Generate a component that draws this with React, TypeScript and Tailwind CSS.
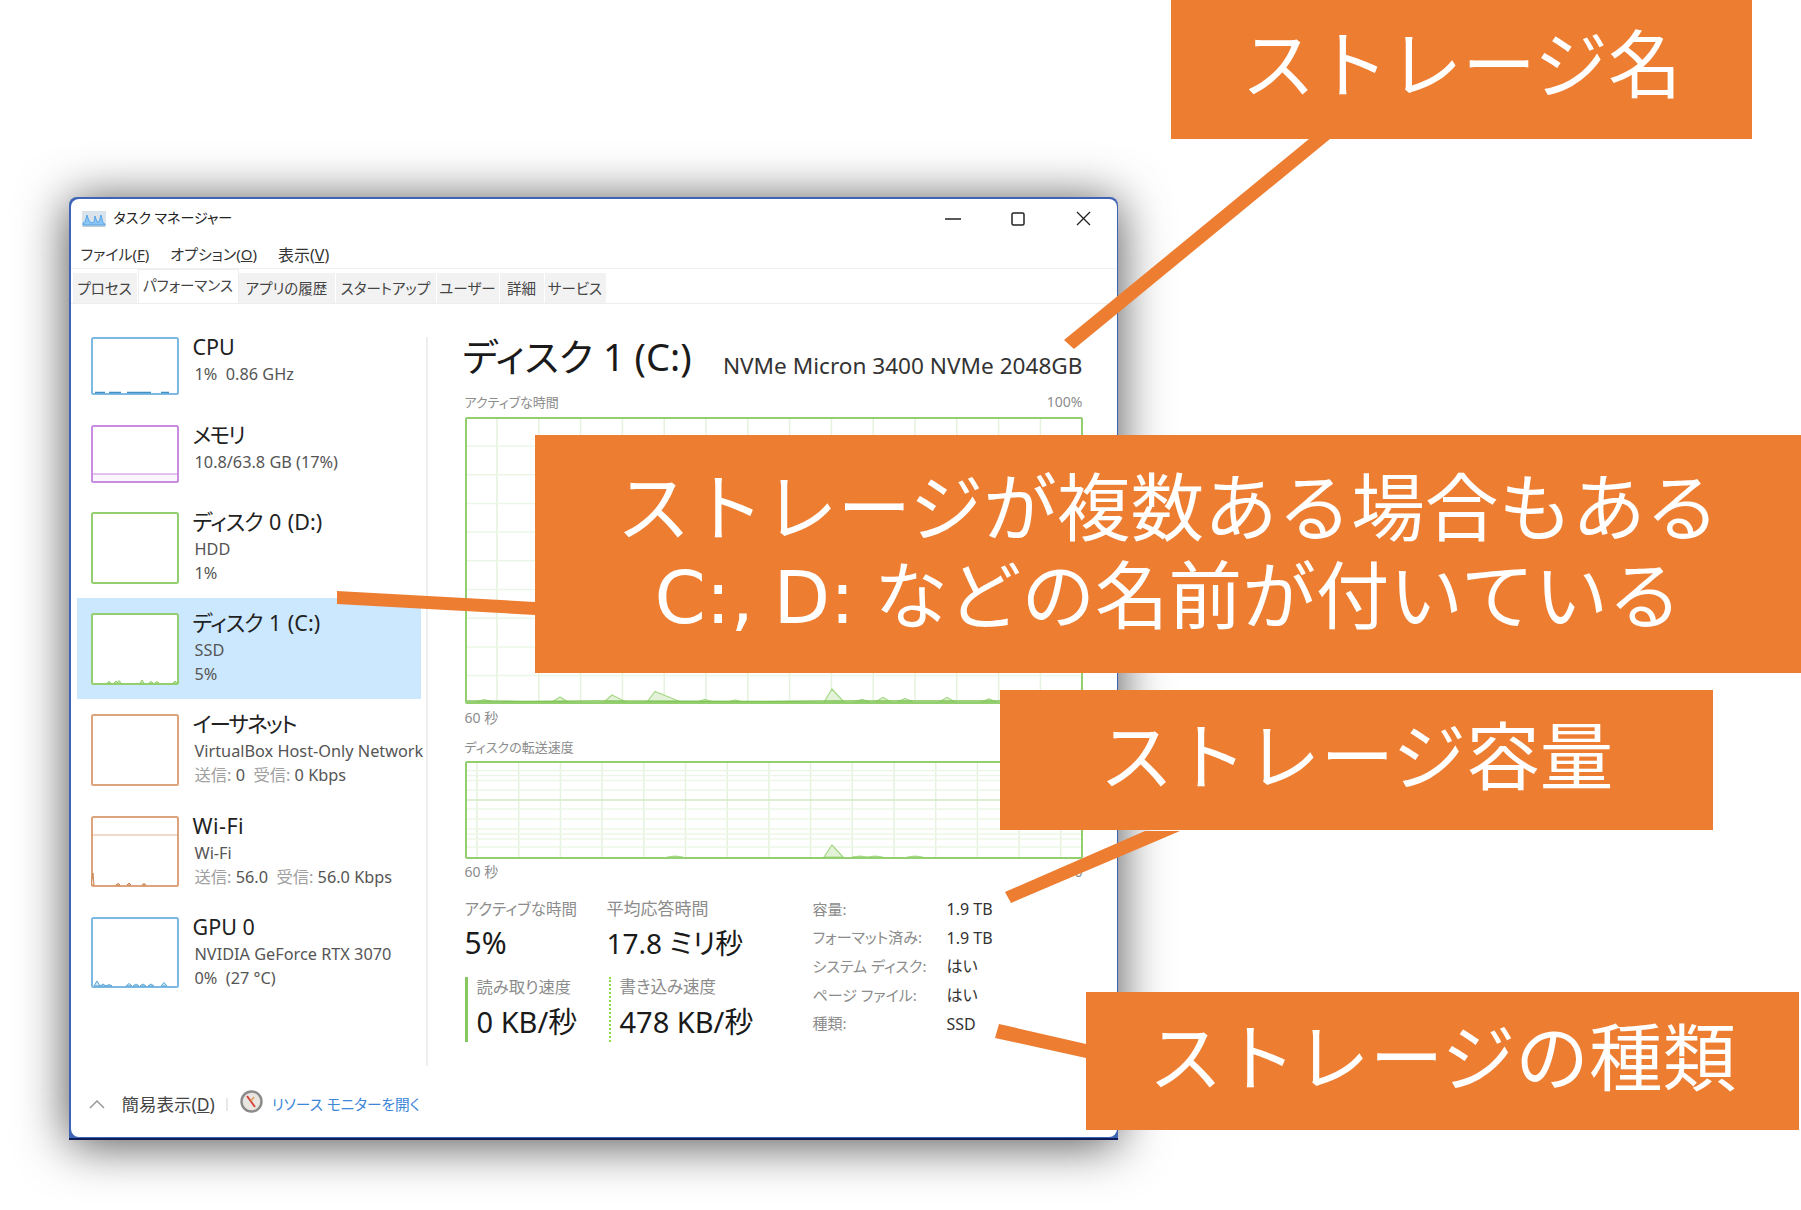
import type { ReactNode } from "react";

const ORANGE = "#ED7D31";

const peakPath = (peaks: number[][], base: number, w = 8) =>
  peaks
    .map(([x, h, r]) => `M${x - w} ${base} L${x} ${base - h} L${x + (r ?? w)} ${base} Z`)
    .join(" ");

const range = (n: number) => Array.from({ length: n }, (_, i) => i);

const Thumb = ({
  w = 88,
  h,
  color,
  children,
}: {
  w?: number;
  h: number;
  color: string;
  children?: ReactNode;
}) => (
  <svg width={w} height={h} className="shrink-0 block">
    <rect x="1" y="1" width={w - 2} height={h - 2} rx="1.5" fill="#fff" stroke={color} strokeWidth="2" />
    {children}
  </svg>
);

interface Row {
  name: ReactNode;
  lines: ReactNode[];
  rowClass: string;
  thumb: ReactNode;
}

const BLUE = "#7db9e2";
const PURPLE = "#c98ce0";
const GREEN = "#93cf6f";
const BROWN = "#dca37c";

const ROWS: Row[] = [
  {
    name: "CPU",
    lines: ["1%  0.86 GHz"],
    rowClass: "h-[88px]",
    thumb: (
      <Thumb h={58} color={BLUE}>
        <path d="M4 55.5H14M18 55.5H30M36 55.5H60M70 55.5H78" stroke="#3f8fc9" strokeWidth="1.5" />
      </Thumb>
    ),
  },
  {
    name: <span className="tracking-[-1.8px]">メモリ</span>,
    lines: ["10.8/63.8 GB (17%)"],
    rowClass: "h-[87px]",
    thumb: (
      <Thumb h={58} color={PURPLE}>
        <rect x="2" y="49" width="84" height="7" fill="#fbf5fd" />
        <path d="M2 49H86" stroke={PURPLE} strokeWidth="1" />
      </Thumb>
    ),
  },
  {
    name: (
      <span className="[word-spacing:1px]">
        <span className="tracking-[-1px]">ディスク</span> 0 (D:)
      </span>
    ),
    lines: ["HDD", "1%"],
    rowClass: "h-[101px]",
    thumb: <Thumb h={72} color={GREEN} />,
  },
  {
    name: (
      <span className="[word-spacing:1px]">
        <span className="tracking-[-1px]">ディスク</span> 1 (C:)
      </span>
    ),
    lines: ["SSD", "5%"],
    rowClass: "h-[101px] bg-[#cce8ff]",
    thumb: (
      <Thumb h={72} color={GREEN}>
        <path d={peakPath([[18, 1.5], [25, 2], [28, 2.5], [51, 3], [60, 1.5], [66, 1.5], [84, 2]], 70, 2)} fill="#dff0d2" stroke={GREEN} strokeWidth="1" />
      </Thumb>
    ),
  },
  {
    name: <span className="tracking-[-1.8px]">イーサネット</span>,
    lines: [
      "VirtualBox Host-Only Network",
      <>
        <span className="text-[#a0a0a0]">送信:</span> 0  <span className="text-[#a0a0a0]">受信:</span> 0 Kbps
      </>,
    ],
    rowClass: "h-[102px]",
    thumb: <Thumb h={72} color={BROWN} />,
  },
  {
    name: <span className="tracking-[0.5px]">Wi-Fi</span>,
    lines: [
      "Wi-Fi",
      <>
        <span className="text-[#a0a0a0]">送信:</span> 56.0  <span className="text-[#a0a0a0]">受信:</span> 56.0 Kbps
      </>,
    ],
    rowClass: "h-[101px]",
    thumb: (
      <Thumb h={71} color={BROWN}>
        <path d="M2 19H86" stroke="#eccdb7" strokeWidth="1.5" />
        <path d={peakPath([[2, 12, 1], [27, 1.5], [38, 2], [53, 1.5]], 69, 2)} fill="#f3dccb" stroke="#c98555" strokeWidth="1" />
      </Thumb>
    ),
  },
  {
    name: "GPU 0",
    lines: ["NVIDIA GeForce RTX 3070", "0%  (27 °C)"],
    rowClass: "h-[101px]",
    thumb: (
      <Thumb h={71} color={BLUE}>
        <path d={peakPath([[6, 5], [12, 2], [18, 1.5], [38, 2.5], [45, 2], [52, 2], [60, 2], [73, 3.5]], 69, 3)} fill="#cfe6f6" stroke="#5aa5d8" strokeWidth="1" />
      </Thumb>
    ),
  },
];

const TABS = [
  { label: "プロセス", cls: "w-[65px]" },
  { label: "パフォーマンス", cls: "w-[101px]", active: true },
  { label: "アプリの履歴", cls: "w-[97px]" },
  { label: "スタートアップ", cls: "w-[101px]" },
  { label: "ユーザー", cls: "w-[63px]" },
  { label: "詳細", cls: "w-[45px]" },
  { label: "サービス", cls: "w-[62px]" },
];

const SPECS = [
  ["容量:", "1.9 TB"],
  ["フォーマット済み:", "1.9 TB"],
  ["システム ディスク:", "はい"],
  ["ページ ファイル:", "はい"],
  ["種類:", "SSD"],
];

const Chart = ({
  height,
  vx,
  hy,
  strong,
  peaks,
  low,
}: {
  height: number;
  vx: number[];
  hy: number[];
  strong?: number;
  peaks: number[][];
  low?: string;
}) => (
  <svg width="618" height={height} className="block">
    {vx.map((x) => (
      <path key={x} d={`M${x} 1V${height - 1}`} stroke="#e5f2dd" strokeWidth="1.5" />
    ))}
    {hy.map((y) => (
      <path key={y} d={`M1 ${y}H617`} stroke={y === strong ? "#d3e9c4" : "#ecf6e6"} strokeWidth="1.5" />
    ))}
    <path d={peakPath(peaks, height - 2)} fill="#e4f2da" stroke="#a5d886" strokeWidth="1.2" />
    {low && <path d={low} stroke="#7fc455" strokeWidth="1.5" fill="none" />}
    <rect x="1" y="1" width="616" height={height - 2} rx="1" fill="none" stroke={GREEN} strokeWidth="2" />
  </svg>
);

const Label = ({ children, className = "" }: { children: ReactNode; className?: string }) => (
  <div className={`h-5 leading-5 text-[#8c8c8c] whitespace-nowrap ${className}`}>{children}</div>
);

const Value = ({ children, className = "" }: { children: ReactNode; className?: string }) => (
  <div className={`h-9 leading-9 text-[#1a1a1a] whitespace-nowrap ${className}`}>{children}</div>
);

const Callout = ({ className, children }: { className: string; children: ReactNode }) => (
  <div
    className={`absolute flex flex-col items-center justify-center bg-[#ED7D31] text-white text-[73.6px] leading-[88px] whitespace-nowrap font-['DejaVu_Sans','Noto_Sans_CJK_JP',sans-serif] ${className}`}
  >
    {children}
  </div>
);

export default function App() {
  return (
    <div className="relative w-[1801px] h-[1210px] overflow-hidden bg-white pt-[197px] pl-[69px]">
      {/* Task Manager window */}
      <div className="w-[1049px] h-[943px] p-[1.5px] bg-[#3f63b5] shadow-[0_4px_50px_rgba(0,0,0,0.7)] rounded-tl-[8px] rounded-tr-[8px] border-b-2 border-[#101d5c] [font-feature-settings:'palt'] font-['Noto_Sans','Noto_Sans_CJK_JP',sans-serif]">
        <div className="flex flex-col h-full bg-white rounded-[8px] overflow-hidden">
          {/* Title bar */}
          <div className="flex items-center justify-between h-[40px] shrink-0">
            <div className="flex items-center pl-[11px] gap-[8px]">
              <svg width="24" height="16" viewBox="0 0 24 16">
                <rect width="24" height="16" fill="#dbe3ea" />
                <path d="M1 14V12L3 11L5 4L7 10L10 12L12 11L13 5L15 11L17 11L19 4L21 12L23 13V14Z" fill="#8cc6f5" stroke="#3d9bea" strokeWidth="0.8" />
                <path d="M1 15H23" stroke="#9db4c8" />
              </svg>
              <span className="text-[14px] text-[#222] leading-none -mt-px">タスク マネージャー</span>
            </div>
            <div className="flex pr-[1px]">
              <div className="w-[65px] h-[40px] flex items-center justify-center">
                <svg width="16" height="2"><path d="M0 1H16" stroke="#222" strokeWidth="1.5" /></svg>
              </div>
              <div className="w-[65px] h-[40px] flex items-center justify-center">
                <svg width="14" height="14"><rect x="1" y="1" width="12" height="12" rx="1.5" fill="none" stroke="#222" strokeWidth="1.5" /></svg>
              </div>
              <div className="w-[65px] h-[40px] flex items-center justify-center">
                <svg width="15" height="15"><path d="M1 1L14 14M14 1L1 14" stroke="#222" strokeWidth="1.3" /></svg>
              </div>
            </div>
          </div>

          {/* Menu */}
          <div className="flex items-center h-[30px] shrink-0 pt-[3px] pl-[10px] gap-[21px] text-[15px] text-[#333] border-b border-[#efefef]">
            <span>ファイル(<span className="underline">F</span>)</span>
            <span>オプション(<span className="underline">O</span>)</span>
            <span className="text-[16px]">表示(<span className="underline">V</span>)</span>
          </div>

          {/* Tabs */}
          <div className="flex items-end h-[35px] shrink-0 pl-[2px] border-b border-[#eeeeee] text-[14.5px] text-[#444]">
            {TABS.map((t) => (
              <div
                key={t.label}
                className={`flex items-center justify-center ${t.cls} ${
                  t.active ? "h-[34px] bg-white border-x border-t border-[#eeeeee] pb-[1px]" : "h-[30px] bg-[#f2f2f2] border-r border-white pt-[2px]"
                }`}
              >
                {t.label}
              </div>
            ))}
          </div>

          {/* Body */}
          <div className="flex h-[769px] shrink-0">
            <div className="w-[355px] shrink-0 pt-[18px] pl-[6px]">
              {ROWS.map((r, i) => (
                <div key={i} className={`flex w-[344px] pl-[14px] pt-[15px] gap-[14px] ${r.rowClass}`}>
                  {r.thumb}
                  <div className="min-w-0 whitespace-nowrap">
                    <div className="h-5 leading-5 text-[21.5px] text-[#222]">{r.name}</div>
                    <div className="mt-[5px] ml-[2px] text-[16.3px] leading-[24px] text-[#555] whitespace-pre">
                      {r.lines.map((l, j) => (
                        <div key={j}>{l}</div>
                      ))}
                    </div>
                  </div>
                </div>
              ))}
            </div>

            <div className="w-[2px] h-[729px] mt-[33px] shrink-0 bg-[#eeeeee]" />

            <div className="w-[618px] ml-[37px] shrink-0">
              <div className="flex items-start justify-between mt-[29.5px] h-[48.5px]">
                <div className="h-[46px] -ml-[2px] leading-[46px] text-[38px] text-[#1a1a1a] whitespace-nowrap">ディスク 1 (C:)</div>
                <div className="h-8 mt-[16.5px] leading-8 text-[22.6px] text-[#333] whitespace-nowrap">NVMe Micron 3400 NVMe 2048GB</div>
              </div>
              <div className="flex justify-between mt-[10px]">
                <Label className="text-[13px]">アクティブな時間</Label>
                <Label className="text-[14px]">100%</Label>
              </div>
              <div className="mt-[5px]">
                <Chart
                  height={287}
                  vx={range(14).map((i) => 32 + i * 41.8)}
                  hy={range(9).map((i) => 29 + i * 28.7)}
                  peaks={[[19, 2.5, 10], [95, 5], [147, 7, 14], [190, 10.5, 26], [240, 2.5], [270, 2], [367, 13, 12], [397, 2.5], [418, 4.5], [440, 3.5], [482, 4.5], [524, 3]]}
                  low="M2 284L60 284.5L130 284L300 284.5L360 284L618 284"
                />
              </div>
              <Label className="text-[14px] mt-[4px]">60 秒</Label>
              <Label className="text-[13px] mt-[9px]">ディスクの転送速度</Label>
              <div className="mt-[4px]">
                <Chart
                  height={98}
                  vx={range(15).map((i) => 12 + i * 41.7)}
                  hy={[9.5, 14.5, 19.5, 29, 39, 48, 58, 68, 73, 78, 86]}
                  strong={39}
                  peaks={[[367, 12, 11], [210, 0.8], [395, 1], [410, 0.8], [450, 0.8]]}
                />
              </div>
              <div className="flex justify-between mt-[3px]">
                <Label className="text-[14px]">60 秒</Label>
                <Label className="text-[14px]">0</Label>
              </div>

              <div className="flex mt-[12px]">
                <div className="w-[348px] pt-[5px] shrink-0 grid grid-cols-[142px_1fr]">
                  <div>
                    <Label className="text-[15.5px]">アクティブな時間</Label>
                    <Value className="mt-[6px] text-[30px]">5%</Value>
                  </div>
                  <div>
                    <Label className="text-[17px]">平均応答時間</Label>
                    <Value className="mt-[6px] text-[28px]">17.8 ミリ秒</Value>
                  </div>
                  <div className="mt-[16px] h-[65px] border-l-[3px] border-[#86c85f] pl-[9px]">
                    <Label className="text-[16.3px]">読み取り速度</Label>
                    <Value className="mt-[7px] text-[29px]">0 KB/秒</Value>
                  </div>
                  <div className="mt-[16px] ml-[2px] h-[65px] border-l-[2px] border-dotted border-[#8fdc4a] pl-[9px]">
                    <Label className="text-[16.5px]">書き込み速度</Label>
                    <Value className="mt-[7px] text-[29px]">478 KB/秒</Value>
                  </div>
                </div>
                <div className="mt-px grid grid-cols-[134px_1fr] auto-rows-[28.7px] items-center text-[15px] whitespace-nowrap">
                  {SPECS.map(([k, v]) => (
                    <div key={k} className="contents">
                      <span className="text-[#8c8c8c]">{k}</span>
                      <span className="text-[16px] text-[#333]">{v}</span>
                    </div>
                  ))}
                </div>
              </div>
            </div>
          </div>

          {/* Footer */}
          <div className="flex items-center flex-1 pl-[18px]">
            <svg width="16" height="9" viewBox="0 0 16 9" className="shrink-0">
              <path d="M1 8L8 1L15 8" fill="none" stroke="#999" strokeWidth="1.5" />
            </svg>
            <span className="ml-[17px] text-[17.5px] text-[#444] whitespace-nowrap">簡易表示(<span className="underline">D</span>)</span>
            <span className="ml-[11px] w-[2px] h-[13px] bg-[#e8e8e8]" />
            <svg width="23" height="23" viewBox="0 0 23 23" className="ml-[12px] shrink-0 -mt-[6px]">
              <circle cx="11.5" cy="11.5" r="10" fill="#e9e6e2" stroke="#8b8b8b" strokeWidth="2.4" />
              <path d="M7 6L15 17" stroke="#d8433a" strokeWidth="2" />
              <path d="M14 7L11 11" stroke="#e0a060" strokeWidth="1.5" />
            </svg>
            <span className="ml-[9px] text-[14.7px] text-[#3c86d8] whitespace-nowrap">リソース モニターを開く</span>
          </div>
        </div>
      </div>

      {/* Callout leader lines */}
      <svg width="1801" height="1210" className="absolute inset-0 pointer-events-none">
        <polygon fill={ORANGE} points="1309,139 1330,139 1074,349 1064,340" />
        <polygon fill={ORANGE} points="337,591 535,602 535,615 337,604" />
        <polygon fill={ORANGE} points="1145,831 1180,831 1011,903 1005,892" />
        <polygon fill={ORANGE} points="999,1024 1086,1044 1086,1058 995,1038" />
      </svg>

      {/* Callouts */}
      <Callout className="left-[1171px] top-0 w-[581px] h-[139px] pb-[6px]">ストレージ名</Callout>
      <Callout className="left-[535px] top-[435px] w-[1266px] h-[238px]">
        <div>ストレージが複数ある場合もある</div>
        <div className="[word-spacing:-4px]">C:, D: などの名前が付いている</div>
      </Callout>
      <Callout className="left-[1000px] top-[690px] w-[713px] h-[140px] pb-[3px]">ストレージ容量</Callout>
      <Callout className="left-[1086px] top-[992px] w-[713px] h-[138px] pb-[3px]">ストレージの種類</Callout>
    </div>
  );
}
